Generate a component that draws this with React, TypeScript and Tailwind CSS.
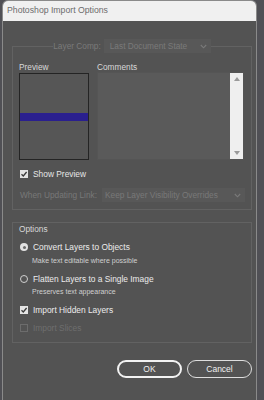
import React from "react";

const font = { fontFamily: '"Liberation Sans", Arial, sans-serif' };

function Chevron() {
  return (
    <svg width="7" height="5" viewBox="0 0 7 5" className="shrink-0">
      <path d="M0.8 1 L3.5 3.8 L6.2 1" fill="none" stroke="#7a7a7a" strokeWidth="1.1" />
    </svg>
  );
}

function CheckBox({ checked, disabled }: { checked?: boolean; disabled?: boolean }) {
  if (disabled) {
    return <div className="w-[8px] h-[8px] border border-[#6c6c6c] shrink-0" />;
  }
  return (
    <div className="w-[8px] h-[8px] bg-[#e4e4e4] shrink-0 flex items-center justify-center">
      {checked && (
        <svg width="8" height="8" viewBox="0 0 8 8">
          <path d="M1.5 4.2 L3.3 6 L6.6 2" fill="none" stroke="#3a3a3a" strokeWidth="1.3" />
        </svg>
      )}
    </div>
  );
}

function Radio({ checked }: { checked?: boolean }) {
  if (checked) {
    return (
      <div className="w-[8px] h-[8px] rounded-full bg-[#e2e2e2] shrink-0 flex items-center justify-center">
        <div className="w-[3px] h-[3px] rounded-full bg-[#6a6a6a]" />
      </div>
    );
  }
  return <div className="w-[8px] h-[8px] rounded-full border border-[#d0d0d0] shrink-0" />;
}

export default function App() {
  return (
    <div className="w-[264px] h-[400px] bg-[#505055] overflow-hidden" style={font}>
      <div className="ml-[2px] w-[255px] h-[400px] flex flex-col border-x border-t border-[#8a8a8a] rounded-t-[6px] overflow-hidden">
        <div className="h-[20px] shrink-0 bg-[#f0f0f0] flex items-center pl-[4px] text-[8.7px] text-[#6c6c6c]">
          Photoshop Import Options
        </div>
        <div className="flex-1 bg-[#535353] flex flex-col">
          <fieldset className="mt-[18px] ml-[9px] mr-[4px] border border-[#626262] pl-[6px] pr-[6px] pb-[7px]">
            <legend className="mx-auto flex items-center gap-[3px] text-[8.3px] text-[#7a7a7a] leading-[14px] whitespace-nowrap">
              <span>Layer Comp:</span>
              <div className="w-[107px] h-[14px] bg-[#585858] flex items-center justify-between pl-[6px] pr-[4px]">
                <span>Last Document State</span>
                <Chevron />
              </div>
            </legend>
            <div className="mt-[9px] flex gap-[8px]">
              <div className="flex flex-col w-[70px]">
                <div className="text-[8.3px] leading-[10px] text-[#d8d8d8]">Preview</div>
                <div className="mt-[1px] h-[87px] border border-[#242424] bg-[#565656] flex flex-col">
                  <div className="mt-[39px] h-[8px] bg-[#2a1f8e]" />
                </div>
              </div>
              <div className="flex flex-col w-[147px]">
                <div className="text-[8.3px] leading-[10px] text-[#d8d8d8]">Comments</div>
                <div className="h-[88px] bg-[#5a5a5a] border border-[#555555] flex justify-end">
                  <div className="w-[13px] h-full bg-[#efefef] flex flex-col items-center justify-between py-[4px]">
                    <svg width="6" height="4" viewBox="0 0 6 4">
                      <path d="M0 4 L3 0 L6 4 Z" fill="#9a9a9a" />
                    </svg>
                    <svg width="6" height="4" viewBox="0 0 6 4">
                      <path d="M0 0 L3 4 L6 0 Z" fill="#9a9a9a" />
                    </svg>
                  </div>
                </div>
              </div>
            </div>
            <div className="mt-[9px] h-[10px] flex items-center gap-[5px] pl-[1px]">
              <CheckBox checked />
              <span className="text-[8.4px] text-[#e6e6e6] leading-[10px]">Show Preview</span>
            </div>
            <div className="mt-[9px] h-[14px] flex items-center gap-[5px] pl-[1px] text-[8.3px] text-[#787878] whitespace-nowrap">
              <span className="shrink-0">When Updating Link:</span>
              <div className="flex-1 min-w-0 h-[14px] bg-[#585858] flex items-center justify-between pl-[3px] pr-[4px]">
                <span>Keep Layer Visibility Overrides</span>
                <Chevron />
              </div>
            </div>
          </fieldset>

          <div className="mt-[12px] ml-[9px] mr-[4px] border border-[#626262] pl-[6px] pt-[1px] pb-[9px] flex flex-col">
            <div className="h-[10px] leading-[10px] text-[8.3px] text-[#d8d8d8]">Options</div>
            <div className="mt-[8px] h-[10px] flex items-center gap-[5px] pl-[1px]">
              <Radio checked />
              <span className="text-[8.4px] text-[#ececec]">Convert Layers to Objects</span>
            </div>
            <div className="mt-[4px] h-[10px] flex items-center pl-[13px] text-[7px] text-[#cfcfcf]">
              Make text editable where possible
            </div>
            <div className="mt-[8px] h-[10px] flex items-center gap-[5px] pl-[1px]">
              <Radio />
              <span className="text-[8.4px] text-[#ececec]">Flatten Layers to a Single Image</span>
            </div>
            <div className="mt-[3px] h-[10px] flex items-center pl-[13px] text-[7px] text-[#cfcfcf]">
              Preserves text appearance
            </div>
            <div className="mt-[8px] h-[10px] flex items-center gap-[5px] pl-[1px]">
              <CheckBox checked />
              <span className="text-[8.4px] text-[#ececec]">Import Hidden Layers</span>
            </div>
            <div className="mt-[8px] h-[10px] flex items-center gap-[5px] pl-[1px]">
              <CheckBox disabled />
              <span className="text-[8.4px] text-[#6e6e6e]">Import Slices</span>
            </div>
          </div>

          <div className="mt-[17px] mr-[4px] flex justify-end gap-[5px]">
            <div className="w-[65px] h-[18px] rounded-full border-2 border-[#f2f2f2] flex items-center justify-center text-[8.5px] text-[#f0f0f0]">
              OK
            </div>
            <div className="w-[65px] h-[18px] rounded-full border-[1.5px] border-[#dedede] flex items-center justify-center text-[8.5px] text-[#f0f0f0]">
              Cancel
            </div>
          </div>
        </div>
      </div>
    </div>
  );
}
